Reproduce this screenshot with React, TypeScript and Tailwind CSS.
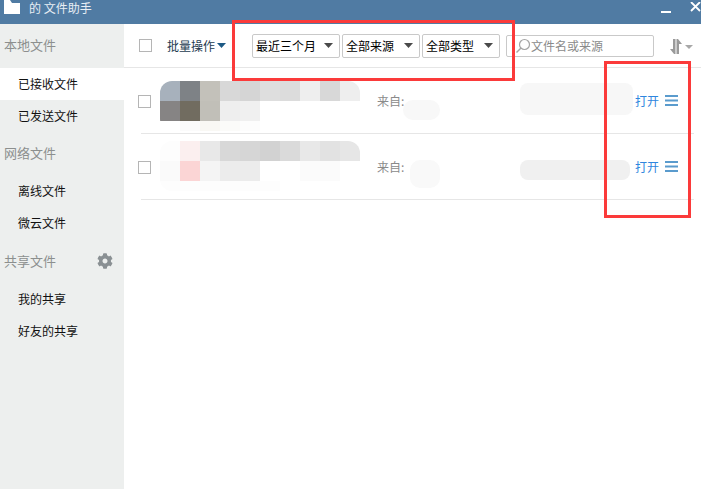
import { FaCog } from "react-icons/fa";

const font = { fontFamily: '"Noto Sans CJK SC", "Liberation Sans", sans-serif' };

type Tile = string;

const row1: Tile[] = [
  "bg-[#a7b1bc]", "bg-[#7e8286]", "bg-[#c3c1ba]", "bg-[#d8d8d8]", "bg-[#d5d5d5]",
  "bg-[#dedede]", "bg-[#dcdcdc]", "bg-[#eeeeee]", "bg-[#d8d8d8]", "bg-[#eeeeee]",
  "bg-[#868484]", "bg-[#716c60]", "bg-[#c1bfb8]", "bg-[#eeeeee]", "bg-[#f0f0f0]",
  "bg-white", "bg-white", "bg-white", "bg-white", "bg-white",
  "bg-white", "bg-[#fbfbfb]", "bg-[#f9f8f4]", "bg-[#fbfbf9]", "bg-[#fdfdfd]",
  "bg-white", "bg-white", "bg-white", "bg-white", "bg-white",
];

const row2: Tile[] = [
  "bg-[#fdfdfd]", "bg-[#fbefef]", "bg-[#e8e8e8]", "bg-[#d8d8d8]", "bg-[#d6d6d6]",
  "bg-[#d2d2d2]", "bg-[#dadada]", "bg-[#e8e8e8]", "bg-[#e2e2e2]", "bg-[#e6e6e6]",
  "bg-[#fafafa]", "bg-[#fbd5d5]", "bg-[#f4f4f4]", "bg-[#ececec]", "bg-[#ececec]",
  "bg-white", "bg-white", "bg-[#fbfbfb]", "bg-[#fbfbfb]", "bg-white",
  "bg-[#fdfdfd]", "bg-[#fdfdfd]", "bg-[#fdfdfd]", "bg-[#fdfdfd]", "bg-[#fdfdfd]",
  "bg-[#fdfdfd]", "bg-white", "bg-white", "bg-white", "bg-white",
];

function Checkbox() {
  return <div className="w-[13px] h-[13px] border border-[#b5b5b5] bg-white shrink-0" />;
}

function Caret({ className }: { className: string }) {
  return (
    <svg width="9" height="5" viewBox="0 0 9 5" className={className}>
      <path d="M0 0h9L4.5 5z" fill="currentColor" />
    </svg>
  );
}

function Filter({ label, width }: { label: string; width: string }) {
  return (
    <div
      className={`${width} h-[24px] flex items-center justify-between pl-[3px] pr-[6px] border border-[#c9c9c9] rounded-[2px] bg-white text-[12px] text-black`}
    >
      <span>{label}</span>
      <Caret className="text-[#4a4a4a]" />
    </div>
  );
}

function NavItem({ label, active }: { label: string; active?: boolean }) {
  return (
    <div className={`h-[32px] flex items-center pl-[18px] text-[12px] text-[#111] ${active ? "bg-white" : ""}`}>
      {label}
    </div>
  );
}

function NavHead({ label, children, className }: { label: string; children?: React.ReactNode; className?: string }) {
  return (
    <div className={`flex items-center justify-between pl-[4px] pr-[11px] text-[13px] text-[#8c8f8e] ${className}`}>
      <span>{label}</span>
      {children}
    </div>
  );
}

function FileRow({
  tiles,
  offset,
  blurA,
  blurB,
}: {
  tiles: Tile[];
  offset: string;
  blurA: string;
  blurB: string;
}) {
  return (
    <div className="h-[66px] border-b border-[#e6e6e6] flex items-center">
      <div className="-ml-[3px] mr-[9px] mt-[2px]">
        <Checkbox />
      </div>
      <div
        className={`${offset} w-[200px] h-[50px] shrink-0 rounded-[12px] overflow-hidden grid grid-cols-10 grid-rows-[20px_20px_10px]`}
      >
        {tiles.map((t, i) => (
          <div key={i} className={t} />
        ))}
      </div>
      <div className="ml-[17px] w-[26px] text-[12px] text-[#8a8a8a] shrink-0 whitespace-nowrap">来自:</div>
      <div className={`${blurA} rounded-[10px] shrink-0`} />
      <div className={`${blurB} rounded-[8px] ml-[80px] shrink-0`} />
      <span className="text-[12px] text-[#2f86de] ml-auto">打开</span>
      <svg width="13" height="11" viewBox="0 0 13 11" className="ml-[6px] mr-[16px] text-[#5a9bcd]">
        <path d="M0 0h13v2H0zM0 4.5h13v2H0zM0 9h13v2H0z" fill="currentColor" />
      </svg>
    </div>
  );
}

export default function App() {
  return (
    <div className="relative w-[701px] h-[489px] overflow-hidden bg-white flex flex-col" style={font}>
      {/* title bar */}
      <div className="h-[24px] shrink-0 bg-[#507ba3] flex items-center text-white">
        <svg width="16" height="14" viewBox="0 0 16 14" className="ml-[4px] -mt-[10px]">
          <path d="M0 0h6l2 3h8v11H0z" fill="#fff" />
        </svg>
        <span className="ml-[9px] -mt-[8px] text-[12px] text-[#e8eef4]">的 文件助手</span>
        <div className="ml-auto flex items-center">
          <div className="w-[10px] h-[2px] bg-white" />
          <svg width="11" height="10" viewBox="0 0 11 10" className="ml-[19px] -mt-[10px]">
            <path d="M1 0l9 9M10 0L1 9" stroke="#fff" strokeWidth="1.8" />
          </svg>
        </div>
      </div>

      <div className="flex-1 flex min-h-0">
        {/* sidebar */}
        <div className="w-[124px] shrink-0 bg-[#edefee]">
          <NavHead label="本地文件" className="h-[44px] pb-[2px]" />
          <NavItem label="已接收文件" active />
          <NavItem label="已发送文件" />
          <NavHead label="网络文件" className="h-[43px] pb-[2px]" />
          <NavItem label="离线文件" />
          <NavItem label="微云文件" />
          <NavHead label="共享文件" className="h-[44px]">
            <FaCog className="text-[#8a9093] text-[16px]" />
          </NavHead>
          <NavItem label="我的共享" />
          <NavItem label="好友的共享" />
        </div>

        {/* main */}
        <div className="flex-1 min-w-0 flex flex-col">
          <div className="h-[44px] shrink-0 border-b border-[#e6e6e6] flex items-center pl-[15px]">
            <Checkbox />
            <span className="ml-[15px] text-[12px] text-[#243b50]">批量操作</span>
            <Caret className="ml-[2px] text-[#1d5a85]" />
            <div className="ml-[26px] flex gap-[2px]">
              <Filter label="最近三个月" width="w-[88px]" />
              <Filter label="全部来源" width="w-[78px]" />
              <Filter label="全部类型" width="w-[78px]" />
            </div>
            <div className="ml-[6px] w-[148px] h-[22px] flex items-center border border-[#c9c9c9] rounded-[2px] text-[12px] text-[#8a8a8a]">
              <svg width="16" height="16" viewBox="0 0 16 16" className="ml-[8px] shrink-0">
                <circle cx="9.5" cy="6.5" r="5" fill="none" stroke="#a5a5a5" strokeWidth="1.2" />
                <path d="M6 10l-4.5 4.5" stroke="#a5a5a5" strokeWidth="1.4" />
              </svg>
              <span>文件名或来源</span>
            </div>
            <svg width="12" height="15" viewBox="0 0 12 15" className="ml-[16px] mt-[1px] text-[#9a9a9a]">
              <path d="M3 0h2.5v15H4L0 10h3zM6.5 0H8l4 5H9v10H6.500z" fill="currentColor" />
            </svg>
            <svg width="8" height="4" viewBox="0 0 8 4" className="ml-[3px] mt-[3px] text-[#a8a8a8]">
              <path d="M0 0h8L4 4z" fill="currentColor" />
            </svg>
          </div>

          <div className="ml-[17px] mr-[7px]">
            <FileRow
              tiles={row1}
              offset="mt-[10px]"
              blurA="w-[37px] h-[20px] mt-[19px] bg-[#f8f8f8]"
              blurB="w-[113px] h-[32px] -mt-[3px] bg-[#f7f7f7]"
            />
            <FileRow
              tiles={row2}
              offset="-mt-[2px]"
              blurA="ml-[7px] w-[30px] h-[28px] mt-[15px] bg-[#f9f9f9]"
              blurB="w-[110px] h-[20px] mt-[7px] bg-[#f0f0f0]"
            />
          </div>
        </div>
      </div>

      {/* red annotation boxes drawn over the screenshot */}
      <div className="absolute left-[232px] top-[20px] w-[283px] h-[61px] border-[3px] border-[#fb3a3a]" />
      <div className="absolute left-[604px] top-[61px] w-[87px] h-[157px] border-[3px] border-[#fb3a3a]" />
    </div>
  );
}
